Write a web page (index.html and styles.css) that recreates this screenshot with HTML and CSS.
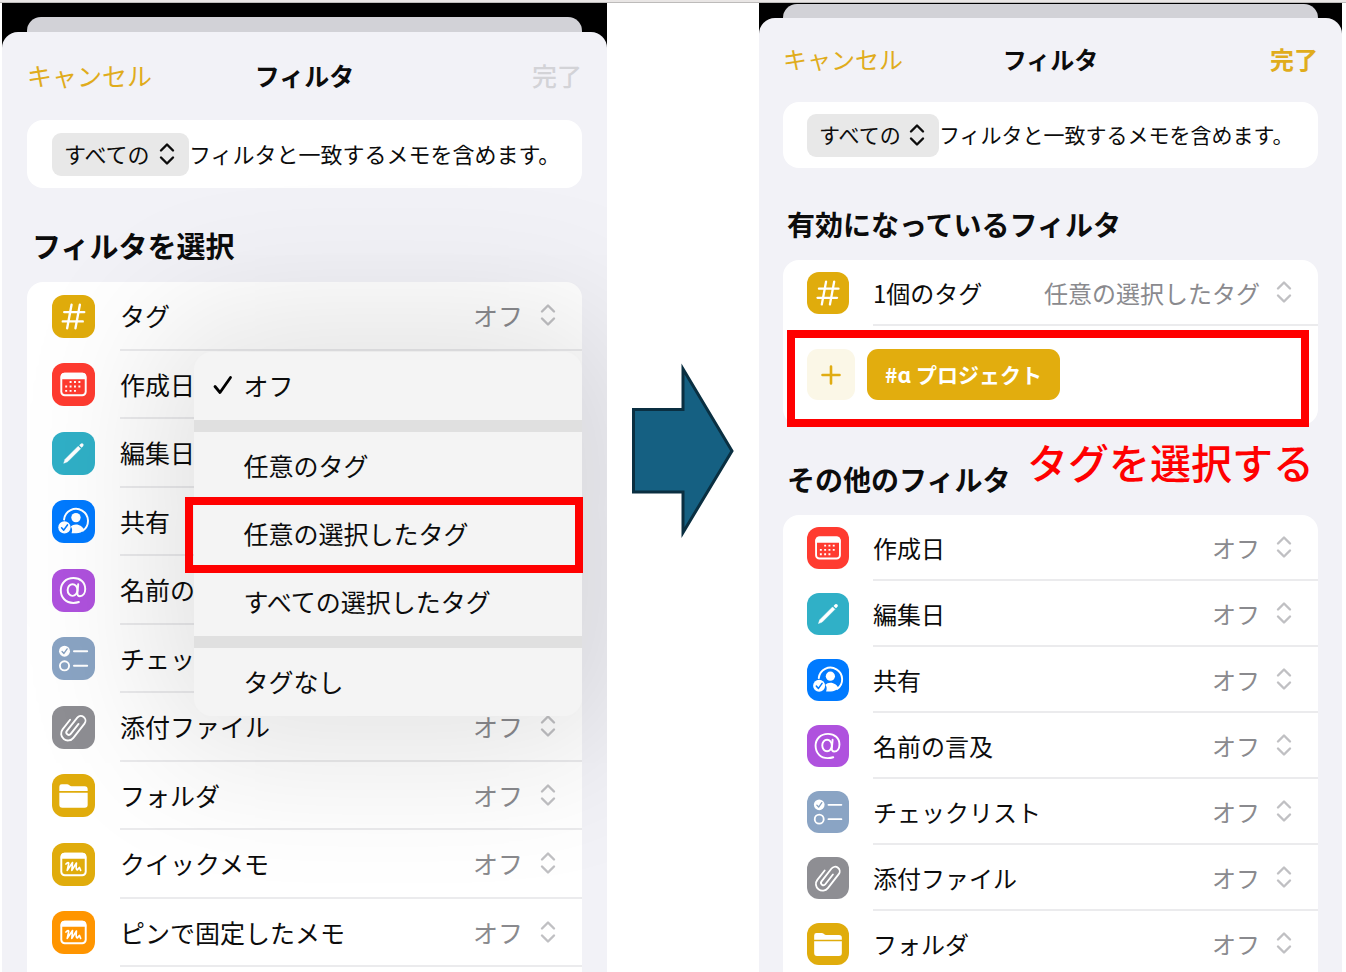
FILE: index.html
```html
<!DOCTYPE html>
<html lang="ja">
<head>
    <meta charset="UTF-8">
    <meta name="viewport" content="width=device-width, initial-scale=1.0">
    <title>フィルタ</title>
    <link rel="stylesheet" href="styles.css">
</head>
<body>
  <svg class="sprite" aria-hidden="true">
    <symbol id="updown" viewBox="0 0 16 24">
      <path d="M2 8.5 8 2.5l6 6M2 15.5l6 6 6-6" fill="none" stroke="currentColor" stroke-width="2.4" stroke-linecap="round" stroke-linejoin="round"/>
    </symbol>
    <symbol id="hash" viewBox="0 0 44 44">
      <path d="M20 10 15.500 34M28.500 10 24 34M12.500 17.500H33M11 27H31.500" fill="none" stroke="#fff" stroke-width="2.400" stroke-linecap="round"/>
    </symbol>
    <symbol id="calendar" viewBox="0 0 44 44">
      <rect x="9.500" y="11" width="25" height="22" rx="3.500" fill="none" stroke="#fff" stroke-width="2"/>
      <path d="M9 16.500V14q0-4 4-4h18q4 0 4 4v2.500z" fill="#fff"/>
      <path d="M19 19.500h.01M23.500 19.500h.01M28 19.500h.01M14.500 24h.01M19 24h.01M23.500 24h.01M28 24h.01M14.500 28.500h.01M19 28.500h.01M23.500 28.500h.01" stroke="#fff" stroke-width="2" stroke-linecap="square"/>
    </symbol>
    <symbol id="pencil" viewBox="0 0 44 44">
      <path d="M12 32 13.400 28 26.800 14.600 29.300 17.100 15.900 30.500z" fill="#fff" stroke="#fff" stroke-width="0.500" stroke-linejoin="round"/>
      <path d="M27.800 13.600 30.300 16.100 32 14.400a1.800 1.800 0 0 0-2.500-2.500z" fill="#fff"/>
    </symbol>
    <symbol id="share" viewBox="0 0 44 44">
      <path d="M12.300 20A12.300 12.300 0 1 1 31.500 31.500" fill="none" stroke="#fff" stroke-width="2" stroke-linecap="round"/>
      <circle cx="24.500" cy="18" r="4.800" fill="#fff"/>
      <path d="M20 34c1-3 .8-5-.8-7 1.500-1.200 3-2 5.300-2 4 0 7 2.500 8.500 5.500-2 2.500-5 3.500-8 3.500z" fill="#fff"/>
      <circle cx="12.700" cy="28" r="6.300" fill="#fff"/>
      <path d="m9.800 28.400 2.200 2.400 3.800-5.300" fill="none" stroke="#007aff" stroke-width="1.600" stroke-linecap="round" stroke-linejoin="round"/>
    </symbol>
    <symbol id="at" viewBox="0 0 44 44">
      <g fill="none" stroke="#fff" stroke-width="2" stroke-linecap="round">
        <ellipse cx="21" cy="21.500" rx="5" ry="6"/>
        <path d="M26.800 15.500 26 24.500c-.2 2 .8 3.300 2.500 3.300 3.200 0 5.500-3 5.500-7.300C34 13.500 29 9.300 22 9.300c-7.800 0-13 5.200-13 12.500S14 34.700 21.800 34.700c2.200 0 4-.3 5.700-.9"/>
      </g>
    </symbol>
    <symbol id="checklist" viewBox="0 0 44 44">
      <circle cx="12.800" cy="14.500" r="5.600" fill="#fff"/>
      <path d="m10.300 14.800 1.900 2 3.300-4.600" fill="none" stroke="#86a0bf" stroke-width="1.400" stroke-linecap="round" stroke-linejoin="round"/>
      <circle cx="12.800" cy="29.500" r="4.700" fill="none" stroke="#fff" stroke-width="1.900"/>
      <path d="M22.500 14.500H36M22.500 29.500H36" stroke="#fff" stroke-width="2" stroke-linecap="round"/>
    </symbol>
    <symbol id="clip" viewBox="0 0 44 44">
      <path transform="translate(21.500 21.500) rotate(38)" d="M2.500-6V7a2.500 2.500 0 0 1-5 0V-10a4.800 4.800 0 0 1 9.600 0V8.500a7 7 0 0 1-14 0V-4" fill="none" stroke="#fff" stroke-width="1.900" stroke-linecap="round"/>
    </symbol>
    <symbol id="folder" viewBox="0 0 44 44">
      <path d="M7.500 17.500V13q0-2.500 2.500-2.500h5.500q1.200 0 2 .8l.6.500q.7.700 1.800.700H33.500q3 0 3 3v2z" fill="#fff"/>
      <path d="M7.500 19.200h29V31.500q0 3-3 3h-23q-3 0-3-3z" fill="#fff"/>
    </symbol>
    <symbol id="memo" viewBox="0 0 44 44">
      <rect x="9.500" y="11" width="25" height="22" rx="3.500" fill="none" stroke="#fff" stroke-width="2"/>
      <path d="M9 16V14q0-4 4-4h18q4 0 4 4v2z" fill="#fff"/>
      <path d="M14.300 21.500C15.800 19.800 17.500 19.500 17 21.300L15.600 28 21 20 20.300 28 25 20.500C24.500 25 24.500 27.500 26 27.500L28 25 29.300 28" fill="none" stroke="#fff" stroke-width="1.700" stroke-linecap="round" stroke-linejoin="round"/>
    </symbol>
  </svg>

  <div class="topbar"></div>

  <main class="steps">
    <section class="screen">
      <div class="back-sheet"></div>
      <div class="sheet">
        <header class="nav">
          <button class="cancel">キャンセル</button>
          <h1>フィルタ</h1>
          <button class="done" disabled>完了</button>
        </header>

        <div class="card match">
          <span class="pill">
            <select id="match1" aria-label="一致の条件"><option>すべての</option></select>
            <svg class="updown"><use href="#updown"/></svg>
          </span>
          <label for="match1">フィルタと一致するメモを含めます。</label>
        </div>

        <h2>フィルタを選択</h2>

        <div class="card picker">
          <ul class="rows">
            <li class="row"><svg class="icon yellow"><use href="#hash"/></svg><div class="line"><label for="a1">タグ</label><select id="a1"><option>オフ</option></select><svg class="updown"><use href="#updown"/></svg></div></li>
            <li class="row"><svg class="icon red"><use href="#calendar"/></svg><div class="line"><span>作成日</span></div></li>
            <li class="row"><svg class="icon teal"><use href="#pencil"/></svg><div class="line"><span>編集日</span></div></li>
            <li class="row"><svg class="icon blue"><use href="#share"/></svg><div class="line"><span>共有</span></div></li>
            <li class="row"><svg class="icon purple"><use href="#at"/></svg><div class="line"><span>名前の</span></div></li>
            <li class="row"><svg class="icon slate"><use href="#checklist"/></svg><div class="line"><span>チェッ</span></div></li>
            <li class="row"><svg class="icon gray"><use href="#clip"/></svg><div class="line"><label for="a7">添付ファイル</label><select id="a7"><option>オフ</option></select><svg class="updown"><use href="#updown"/></svg></div></li>
            <li class="row"><svg class="icon yellow"><use href="#folder"/></svg><div class="line"><label for="a8">フォルダ</label><select id="a8"><option>オフ</option></select><svg class="updown"><use href="#updown"/></svg></div></li>
            <li class="row"><svg class="icon yellow"><use href="#memo"/></svg><div class="line"><label for="a9">クイックメモ</label><select id="a9"><option>オフ</option></select><svg class="updown"><use href="#updown"/></svg></div></li>
            <li class="row"><svg class="icon orange"><use href="#memo"/></svg><div class="line"><label for="a10">ピンで固定したメモ</label><select id="a10"><option>オフ</option></select><svg class="updown"><use href="#updown"/></svg></div></li>
          </ul>

          <div class="menu">
            <button class="item">
              <svg class="check" viewBox="0 0 20 20"><path d="M2 11.500 7 17.500 17.500 2.500" fill="none" stroke="#000" stroke-width="2.800" stroke-linecap="round" stroke-linejoin="round"/></svg>
              オフ
            </button>
            <div class="divider"></div>
            <button class="item">任意のタグ</button>
            <button class="item marked">任意の選択したタグ</button>
            <button class="item">すべての選択したタグ</button>
            <div class="divider"></div>
            <button class="item">タグなし</button>
          </div>
        </div>
      </div>
    </section>

    <svg class="arrow" viewBox="0 0 104 176">
      <path d="M2.500 46.500H52V6L101 88 52 169.500V129H2.500z" fill="#156082" stroke="#0a2f41" stroke-width="3"/>
    </svg>

    <section class="screen small">
      <div class="back-sheet"></div>
      <div class="sheet">
        <header class="nav">
          <button class="cancel">キャンセル</button>
          <h1>フィルタ</h1>
          <button class="done">完了</button>
        </header>

        <div class="card match">
          <span class="pill">
            <select id="match2" aria-label="一致の条件"><option>すべての</option></select>
            <svg class="updown"><use href="#updown"/></svg>
          </span>
          <label for="match2">フィルタと一致するメモを含めます。</label>
        </div>

        <h2>有効になっているフィルタ</h2>

        <div class="card">
          <div class="row"><svg class="icon yellow"><use href="#hash"/></svg><div class="line"><label for="b1">1個のタグ</label><select id="b1"><option>任意の選択したタグ</option></select><svg class="updown"><use href="#updown"/></svg></div></div>
          <div class="tags marked">
            <button class="add" aria-label="追加"><svg viewBox="0 0 20 20"><path d="M10 1.500v17M1.500 10h17" fill="none" stroke="#e0ac12" stroke-width="2.600" stroke-linecap="round"/></svg></button>
            <button class="chip">#ɑ<span>プロジェクト</span></button>
          </div>
        </div>

        <div class="others">
          <h2>その他のフィルタ</h2>
          <span class="note">タグを選択する</span>
        </div>

        <ul class="card rows">
          <li class="row"><svg class="icon red"><use href="#calendar"/></svg><div class="line"><label for="b2">作成日</label><select id="b2"><option>オフ</option></select><svg class="updown"><use href="#updown"/></svg></div></li>
          <li class="row"><svg class="icon teal"><use href="#pencil"/></svg><div class="line"><label for="b3">編集日</label><select id="b3"><option>オフ</option></select><svg class="updown"><use href="#updown"/></svg></div></li>
          <li class="row"><svg class="icon blue"><use href="#share"/></svg><div class="line"><label for="b4">共有</label><select id="b4"><option>オフ</option></select><svg class="updown"><use href="#updown"/></svg></div></li>
          <li class="row"><svg class="icon purple"><use href="#at"/></svg><div class="line"><label for="b5">名前の言及</label><select id="b5"><option>オフ</option></select><svg class="updown"><use href="#updown"/></svg></div></li>
          <li class="row"><svg class="icon slate"><use href="#checklist"/></svg><div class="line"><label for="b6">チェックリスト</label><select id="b6"><option>オフ</option></select><svg class="updown"><use href="#updown"/></svg></div></li>
          <li class="row"><svg class="icon gray"><use href="#clip"/></svg><div class="line"><label for="b7">添付ファイル</label><select id="b7"><option>オフ</option></select><svg class="updown"><use href="#updown"/></svg></div></li>
          <li class="row"><svg class="icon yellow"><use href="#folder"/></svg><div class="line"><label for="b8">フォルダ</label><select id="b8"><option>オフ</option></select><svg class="updown"><use href="#updown"/></svg></div></li>
        </ul>
      </div>
    </section>
  </main>
</body>
</html>
```

FILE: styles.css
```css
* {
  box-sizing: border-box;
}

body {
  margin: 0;
  height: 100vh;
  overflow: hidden;
  display: flex;
  flex-direction: column;
  background: white;
  color: #0c0c0c;
  font-family: "Noto Sans CJK JP", sans-serif;
}

button, select {
  margin: 0;
  padding: 0;
  border: 0;
  background: none;
  color: inherit;
  font: inherit;
  appearance: none;
}

.sprite {
  display: none;
}

.topbar {
  flex: none;
  height: 3px;
  background: #e9e6e5;
  border-bottom: 1px solid #bdbbba;
}

.steps {
  flex: 1;
  min-height: 0;
  display: grid;
  grid-template-columns: 605fr 152px 583fr;
  grid-template-rows: 100%;
  padding: 0 4px 0 2px;
}

/* phone screens */
.screen {
  --text: 25px;
  --small-text: 22px;
  --heading: 29px;
  --side: 25px;
  --icon: 43px;
  --nav: 88px;
  --match: 68px;
  display: flex;
  flex-direction: column;
  min-height: 0;
  padding-top: 14px;
  background: linear-gradient(black 100px, #f2f2f7 100px);
  font-size: var(--text);
}

.screen.small {
  --text: 24px;
  --small-text: 21px;
  --heading: 28px;
  --side: 24px;
  --icon: 42px;
  --nav: 84px;
  --match: 66px;
  padding-top: 1px;
}

.back-sheet {
  flex: none;
  height: 15px;
  margin: 0 var(--side);
  background: #d2d2d7;
  border-radius: 14px 14px 0 0;
}

.small .back-sheet {
  height: 14px;
}

.sheet {
  flex: 1;
  min-height: 0;
  display: flex;
  flex-direction: column;
  padding: 0 var(--side);
  overflow: hidden;
  background: #f2f2f7;
  border-radius: 16px 16px 0 0;
}

.sheet > * {
  flex: none;
}

.nav {
  height: var(--nav);
  display: grid;
  grid-template-columns: 1fr auto 1fr;
  align-items: center;
  padding-bottom: 3px;
}

.nav h1 {
  margin: 0;
  font-size: inherit;
  font-weight: bold;
}

.cancel {
  justify-self: start;
  color: #e0ac1c;
}

.done {
  justify-self: end;
  color: #e0ac1c;
  font-weight: bold;
}

.done:disabled {
  color: #d3d3d7;
  font-weight: 500;
}

.card {
  margin: 0;
  padding: 0;
  background: white;
  border-radius: 16px;
}

.match {
  height: var(--match);
  display: flex;
  align-items: center;
  padding-left: var(--side);
  font-size: var(--small-text);
  white-space: nowrap;
}

.pill {
  display: flex;
  align-items: center;
  gap: 6px;
  height: 43px;
  padding: 0 14px 0 12px;
  background: #e8e8e8;
  border-radius: 9px;
}

.match label, .match select {
  padding-bottom: 3px;
}

h2 {
  margin: 35px 5px 15px;
  font-size: var(--heading);
  line-height: 44px;
  font-weight: bold;
}

.small h2 {
  margin: 34px 4px 14px;
}

/* filter rows */
.rows {
  list-style: none;
  margin: 0;
  padding: 0;
}

.sheet > .rows {
  padding-bottom: 20px;
}

.row {
  display: flex;
  align-items: center;
  gap: var(--side);
  padding-left: var(--side);
}

.small .row {
  height: 66px;
}

.icon {
  flex: none;
  width: var(--icon);
  height: var(--icon);
  border-radius: 12px;
}

.yellow { background: #e0ac0c; }
.red { background: #ff3b30; }
.teal { background: #30b0c7; }
.blue { background: #007aff; }
.purple { background: #af52de; }
.slate { background: #8aa4c4; }
.gray { background: #8e8e93; }
.orange { background: #ff9500; }

.line {
  flex: 1;
  align-self: stretch;
  display: flex;
  align-items: center;
  padding-right: 26px;
  border-bottom: 2px solid #ebebed;
  white-space: nowrap;
}

.line select {
  margin-left: auto;
  color: #8a8a8e;
}

.updown {
  flex: none;
  width: 16px;
  height: 24px;
}

.line .updown {
  margin-left: 16px;
  color: #c0c0c3;
}

.sheet > .picker {
  flex: 1;
  position: relative;
  display: flex;
  padding-bottom: 5px;
  border-radius: 16px 16px 0 0;
}

.picker .rows {
  flex: 1;
  display: grid;
  grid-auto-rows: 1fr;
}

/* open menu over the list */
.menu {
  position: absolute;
  top: 70px;
  left: 30%;
  right: 0;
  background: #f4f4f4;
  border-radius: 18px;
  box-shadow: 0 0 150px 35px rgba(0, 0, 0, 0.12);
}

.item {
  position: relative;
  display: flex;
  align-items: center;
  width: 100%;
  height: 68px;
  padding: 0 0 3px 50px;
}

.check {
  position: absolute;
  left: 19px;
  width: 20px;
  height: 20px;
}

.divider {
  height: 12px;
  background: #e0e0e0;
}

/* red frames */
.marked {
  position: relative;
}

.marked::after {
  content: '';
  position: absolute;
  inset: -3px -1px -5px -9px;
  border: 8px solid red;
}

.tags.marked::after {
  inset: 4px 9px -2px 4px;
}

.tags {
  display: flex;
  gap: 12px;
  height: 99px;
  padding: 23px 24px;
}

.add {
  display: flex;
  align-items: center;
  justify-content: center;
  width: 48px;
  height: 51px;
  background: #fbf7e7;
  border-radius: 11px;
}

.add svg {
  width: 20px;
  height: 20px;
}

.chip {
  height: 51px;
  padding: 0 18px 2px;
  background: #e2ad0e;
  border-radius: 11px;
  color: white;
  font-size: var(--small-text);
  font-weight: bold;
}

.chip span {
  margin-left: 5px;
}

.others {
  position: relative;
}

.others h2 {
  margin-top: 32px;
}

.note {
  position: absolute;
  top: 6px;
  right: 4px;
  color: red;
  font-size: 41px;
  line-height: 60px;
  font-weight: 500;
  white-space: nowrap;
}

.arrow {
  justify-self: center;
  width: 104px;
  height: 176px;
  margin-top: 360px;
}
```
